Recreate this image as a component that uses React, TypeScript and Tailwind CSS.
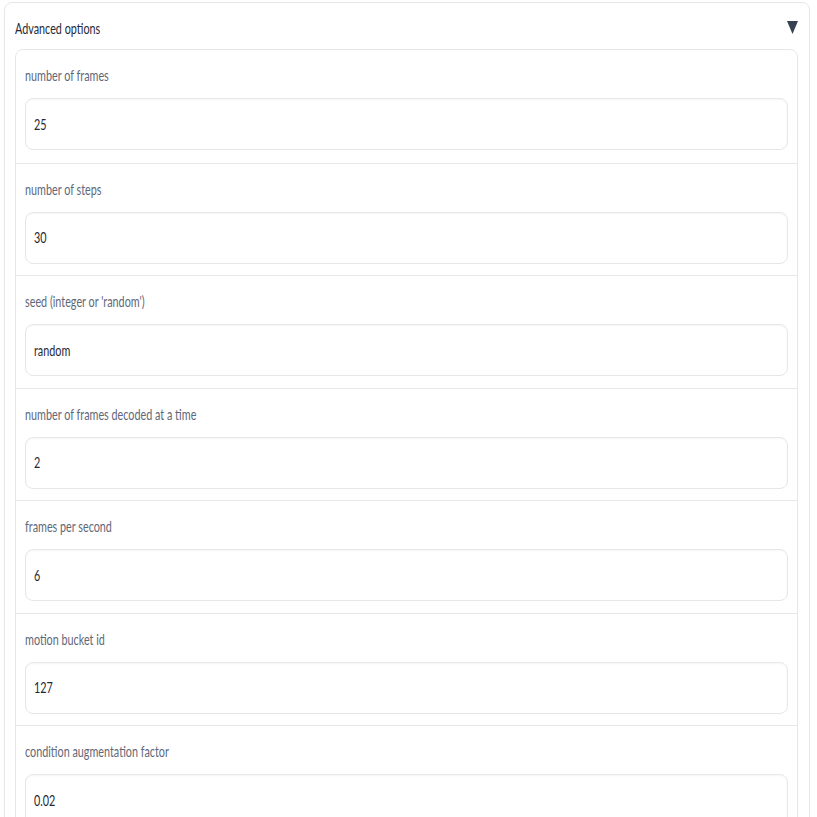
import { FC } from 'react';

const fields = [
  { label: 'number of frames', value: '25' },
  { label: 'number of steps', value: '30' },
  { label: "seed (integer or 'random')", value: 'random' },
  { label: 'number of frames decoded at a time', value: '2' },
  { label: 'frames per second', value: '6' },
  { label: 'motion bucket id', value: '127' },
  { label: 'condition augmentation factor', value: '0.02' },
];

const Narrow: FC<{ children: React.ReactNode; className?: string }> = ({ children, className }) => (
  <span className={`inline-block origin-left scale-x-[0.72] whitespace-nowrap ${className ?? ''}`}>{children}</span>
);

const App: FC = () => {
  return (
    <div className="h-[817px] overflow-hidden bg-white font-['Lato',sans-serif]">
      <div className="ml-[4px] mr-[7px] mt-[2px] rounded-lg border border-[#e5e7eb] bg-white pl-[10px] pr-[11px]">
        <div className="flex h-[46px] items-center justify-between">
          <Narrow className="mt-[4px] text-[15px] text-[#1f2937]">Advanced options</Narrow>
          <svg width="11" height="13" viewBox="0 0 11 13" className="mt-[2px]">
            <polygon points="0,0 11,0 5.5,13" fill="#374151" />
          </svg>
        </div>
        <div className="rounded-lg border border-[#e5e7eb] bg-white">
          {fields.map((f, i) => (
            <div
              key={f.label}
              className={`h-[112.5px] px-[9px] pt-[16px] ${i > 0 ? 'border-t border-[#e5e7eb]' : ''}`}
            >
              <div className="h-[18px] leading-[18px]">
                <Narrow className="text-[15px] text-[#5f6878]">{f.label}</Narrow>
              </div>
              <div className="mt-[14px] flex h-[52px] items-center rounded-lg border border-[#e5e7eb] bg-white px-[8px] shadow-[inset_0_1px_2px_rgba(0,0,0,0.04)]">
                <Narrow className="text-[15px] text-[#1f2937]">{f.value}</Narrow>
              </div>
            </div>
          ))}
        </div>
      </div>
    </div>
  );
};

export default App;
